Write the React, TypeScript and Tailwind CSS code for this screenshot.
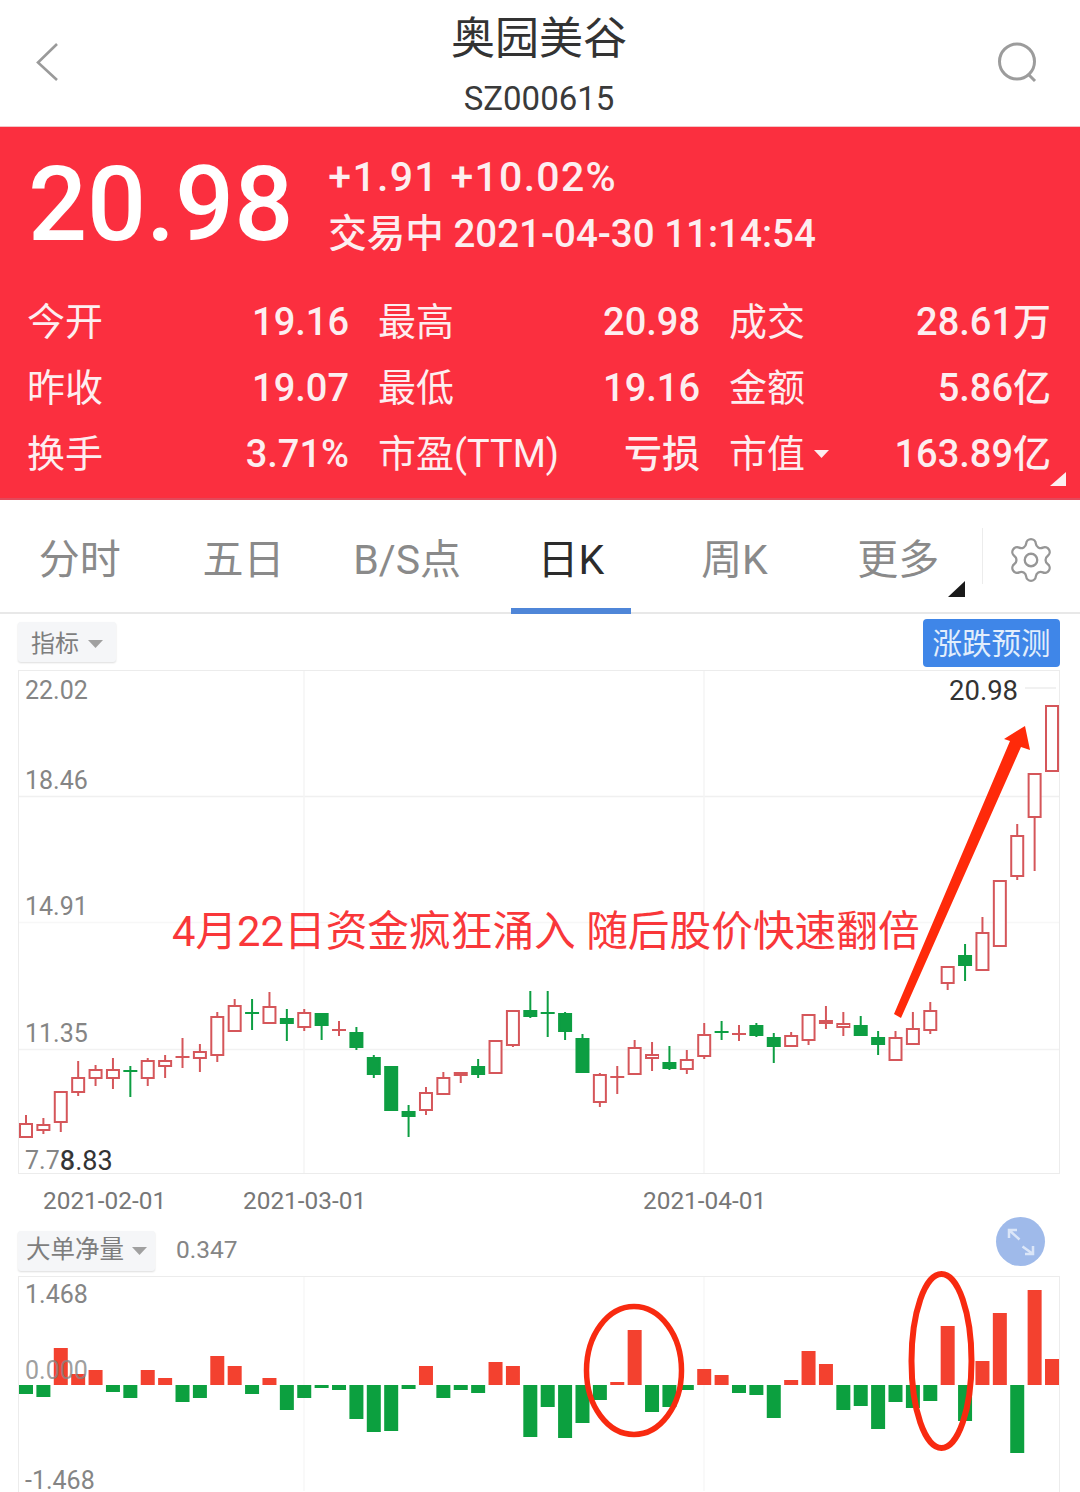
import { Settings } from "lucide-react";

// [isUp, high, bodyTop, bodyBottom, low], y in page pixels
const candles: [number, number, number, number, number][] = [
  [1, 1116, 1125, 1138, 1138], [1, 1119, 1126, 1131, 1135], [1, 1093, 1093, 1123, 1133], [1, 1062, 1079, 1093, 1097],
  [1, 1066, 1071, 1079, 1087], [1, 1059, 1071, 1079, 1090], [0, 1067, 1072, 1073, 1098], [1, 1059, 1062, 1079, 1087],
  [1, 1056, 1062, 1067, 1079], [1, 1039, 1058, 1059, 1069], [1, 1045, 1053, 1059, 1073], [1, 1013, 1018, 1056, 1063],
  [1, 1000, 1007, 1032, 1033], [0, 1000, 1014, 1015, 1031], [1, 993, 1008, 1024, 1025], [0, 1010, 1020, 1024, 1042],
  [1, 1010, 1014, 1028, 1032], [0, 1015, 1015, 1026, 1041], [1, 1022, 1031, 1032, 1037], [0, 1028, 1034, 1048, 1051],
  [0, 1056, 1059, 1075, 1079], [0, 1068, 1068, 1111, 1112], [0, 1106, 1113, 1117, 1138], [1, 1088, 1094, 1111, 1116],
  [1, 1073, 1079, 1095, 1095], [1, 1074, 1074, 1076, 1084], [0, 1060, 1068, 1075, 1079], [1, 1042, 1042, 1074, 1074],
  [1, 1012, 1012, 1046, 1048], [0, 992, 1012, 1017, 1019], [0, 992, 1014, 1015, 1038], [0, 1013, 1015, 1032, 1041],
  [0, 1035, 1040, 1073, 1074], [1, 1074, 1076, 1103, 1108], [1, 1067, 1078, 1079, 1095], [1, 1041, 1049, 1075, 1076],
  [1, 1043, 1056, 1059, 1072], [0, 1047, 1064, 1069, 1071], [1, 1051, 1061, 1070, 1075], [1, 1024, 1036, 1057, 1060],
  [0, 1022, 1033, 1034, 1041], [1, 1026, 1035, 1036, 1042], [0, 1024, 1027, 1036, 1038], [0, 1034, 1039, 1047, 1064],
  [1, 1033, 1037, 1047, 1047], [1, 1016, 1016, 1041, 1046], [1, 1007, 1022, 1024, 1030], [1, 1013, 1025, 1028, 1037],
  [0, 1017, 1027, 1036, 1037], [0, 1032, 1039, 1045, 1056], [1, 1032, 1039, 1061, 1062], [1, 1013, 1030, 1045, 1045],
  [1, 1003, 1012, 1031, 1035], [1, 968, 968, 984, 991], [0, 945, 957, 966, 982], [1, 918, 934, 971, 971],
  [1, 882, 882, 947, 947], [1, 825, 837, 877, 881], [1, 775, 775, 818, 872], [1, 707, 707, 772, 772],
];

// net volume bars, in px from the zero line (positive goes up)
const bars = [
  -9, -12, 37, 11, 15, -7, -13, 15, 7, -17, -13, 29, 19, -9, 7, -25, -13, -3, -5, -34, -47, -46, -4, 19, -13, -5, -8, 23,
  19, -52, -22, -53, -38, -15, 3, 55, -27, -22, -5, 16, 10, -8, -10, -33, 5, 34, 21, -25, -21, -44, -17, -23, -16, 59,
  -36, 24, 72, -68, 95, 26,
];

const candleX = (i: number) => 26 + i * 17.39;

const stats = [
  ["今开", "19.16", "最高", "20.98", "成交", "28.61万"],
  ["昨收", "19.07", "最低", "19.16", "金额", "5.86亿"],
  ["换手", "3.71%", "市盈(TTM)", "亏损", "市值", "163.89亿"],
];

const tabs = ["分时", "五日", "B/S点", "日K", "周K", "更多"];

function Caret({ color = "#a0a0a0" }: { color?: string }) {
  return (
    <svg width="15" height="8" viewBox="0 0 15 8" className="shrink-0">
      <path d="M0 0H15L7.5 8Z" fill={color} />
    </svg>
  );
}

function KChart() {
  return (
    <svg viewBox="19 672 1040 502" className="block w-[1040px] h-[502px]">
      <line x1="19" x2="1059" y1="797.5" y2="797.5" stroke="#f0f0f0" strokeWidth="1.5" />
      <line x1="19" x2="1059" y1="923.5" y2="923.5" stroke="#f7f7f7" strokeWidth="1.5" />
      <line x1="19" x2="1059" y1="1050.5" y2="1050.5" stroke="#f2f2f2" strokeWidth="1.5" />
      <line x1="1025" x2="1056" y1="689" y2="689" stroke="#ececec" strokeWidth="1.5" />
      {[304, 704].map((x) => (
        <line key={x} x1={x} x2={x} y1="672" y2="1174" stroke="#f5f5f5" strokeWidth="1.5" />
      ))}
      {candles.map(([up, high, top, bottom, low], i) => {
        const x = candleX(i);
        const color = up ? "#d5565a" : "#0d9e42";
        const flat = bottom - top <= 1;
        return (
          <g key={i}>
            <line x1={x} x2={x} y1={high} y2={low} stroke={color} strokeWidth="2" />
            {flat ? (
              <line x1={x - 7} x2={x + 7} y1={top} y2={top} stroke={color} strokeWidth="2" />
            ) : (
              <rect
                x={x - 6}
                y={top}
                width="12"
                height={bottom - top}
                fill={up ? "#fff" : color}
                stroke={color}
                strokeWidth="2"
              />
            )}
          </g>
        );
      })}
    </svg>
  );
}

function FlowChart() {
  return (
    <svg viewBox="19 1278 1040 214" className="block w-[1040px] h-[214px]">
      {[304, 704].map((x) => (
        <line key={x} x1={x} x2={x} y1="1278" y2="1492" stroke="#f7f7f7" strokeWidth="1.5" />
      ))}
      {bars.map((v, i) => (
        <rect
          key={i}
          x={candleX(i) - 7}
          y={v > 0 ? 1386 - v : 1386}
          width="14"
          height={Math.abs(v)}
          fill={v > 0 ? "#f3412f" : "#0ca03f"}
        />
      ))}
    </svg>
  );
}

export default function App() {
  return (
    <div className="relative w-[1080px] h-[1492px] overflow-hidden bg-white font-[Roboto,'Noto_Sans_CJK_SC',sans-serif]">
      {/* Top bar */}
      <div className="flex h-[126px] items-center justify-between pl-[35px] pr-[42px]">
        <svg width="24" height="40" viewBox="0 0 24 40" className="mb-[2px]">
          <path d="M22 2L3 20.5L22 38" fill="none" stroke="#9a9a9a" strokeWidth="2.6" />
        </svg>
        <div className="flex flex-col items-center pl-[22px] pt-[8px]">
          <div className="text-[44px] leading-[52px] text-[#333] mt-[-2px]">奥园美谷</div>
          <div className="text-[33px] leading-[40px] text-[#3a3a3a] mt-[14px]">SZ000615</div>
        </div>
        <svg width="41" height="42" viewBox="0 0 41 42" className="mb-[1px]">
          <circle cx="20" cy="19.5" r="17.5" fill="none" stroke="#9c9c9c" strokeWidth="3" />
          <path d="M31 32L38 39" fill="none" stroke="#9c9c9c" strokeWidth="3" />
        </svg>
      </div>

      {/* Quote band */}
      <div className="relative h-[374px] border-t border-t-[#f3c5c8] border-b-2 border-b-[#e3485a] bg-[#fb2f3f] text-[#fdeef0]">
        <div className="flex h-[152px] items-start pl-[28px]">
          <div className="text-[104px] leading-[120px] font-medium text-white mt-[18px]">20.98</div>
          <div className="ml-[35px] mt-[25px] font-medium">
            <div className="text-[41px] leading-[50px] tracking-[1.3px]">+1.91 +10.02%</div>
            <div className="leading-[50px] mt-[7px] text-[38.5px]">交易中 2021-04-30 11:14:54</div>
          </div>
        </div>
        <div className="flex flex-col pl-[27px] pr-[29px] mt-[10px]">
          {stats.map((row) => (
            <div key={row[0]} className="flex h-[66px] items-center gap-[29px] text-[38px] leading-[50px]">
              <div className="flex w-[322px] justify-between">
                <span>{row[0]}</span>
                <span className="font-medium">{row[1]}</span>
              </div>
              <div className="flex w-[322px] justify-between">
                <span>{row[2]}</span>
                <span className="font-medium">{row[3]}</span>
              </div>
              <div className="flex w-[322px] justify-between">
                <span className="flex items-center gap-[9px]">
                  {row[4]}
                  {row[4] === "市值" && <Caret color="#fdeef0" />}
                </span>
                <span className="font-medium">{row[5]}</span>
              </div>
            </div>
          ))}
        </div>
        <svg width="16" height="14" viewBox="0 0 16 14" className="absolute right-[14px] bottom-[12px]">
          <path d="M16 0V14H0Z" fill="#fdeef0" />
        </svg>
      </div>

      {/* Period tabs */}
      <div className="relative flex h-[114px] border-b-2 border-b-[#e8e8e8]">
        <div className="grid w-[982px] grid-cols-6">
          {tabs.map((tab) => (
            <div key={tab} className="relative flex items-center justify-center pt-[10px] pr-[4px]">
              <span className={`text-[41px] ${tab === "日K" ? "text-[#2c2c2c]" : "text-[#8a8a8a]"}`}>{tab}</span>
              {tab === "日K" && (
                <div className="absolute bottom-[-2px] left-[20px] h-[6px] w-[120px] bg-[#4f86d8]" />
              )}
            </div>
          ))}
        </div>
        <div className="flex flex-1 items-center justify-center border-l border-l-[#ececec] my-[28px] pt-[8px] pr-[2px]">
          <Settings size={50} strokeWidth={1.1} color="#969696" />
        </div>
        <svg width="17" height="16" viewBox="0 0 17 16" className="absolute left-[948px] top-[81px]">
          <path d="M17 0V16H0Z" fill="#1a1a1a" />
        </svg>
      </div>

      {/* K chart toolbar */}
      <div className="flex h-[56px] items-center justify-between pl-[18px] pr-[20px]">
        <div className="flex h-[40px] w-[98px] items-center gap-[9px] rounded-[3px] bg-[#f5f6f8] pl-[13px] pt-[4px] text-[24px] text-[#7e7e7e] shadow-[0_1px_2px_#dddddd]">
          指标
          <Caret />
        </div>
        <div className="mt-[2px] flex h-[48px] w-[137px] items-center justify-center rounded-[4px] bg-[#3f86e8] pt-[3px] text-[29.5px] text-[#e2eefc]">
          涨跌预测
        </div>
      </div>

      {/* K chart */}
      <div className="relative mx-[18px] h-[504px] w-[1042px] border border-[#ececec]">
        <KChart />
        <span className="absolute left-[6px] top-[5px] text-[25px] leading-[30px] text-[#858585]">22.02</span>
        <span className="absolute left-[6px] top-[95px] text-[25px] leading-[30px] text-[#858585]">18.46</span>
        <span className="absolute left-[6px] top-[221px] text-[25px] leading-[30px] text-[#858585]">14.91</span>
        <span className="absolute left-[6px] top-[348px] text-[25px] leading-[30px] text-[#858585]">11.35</span>
        <span className="absolute left-[6px] top-[475px] text-[25px] leading-[30px] text-[#858585]">7.78</span>
        <span className="absolute left-[41px] top-[475px] text-[27px] leading-[30px] text-[#333]">8.83</span>
        <span className="absolute left-[930px] top-[5px] text-[27.5px] leading-[30px] text-[#333]">20.98</span>
      </div>

      {/* Date axis */}
      <div className="flex h-[53px] items-center pl-[43px] pt-[2px] text-[24.4px] text-[#777]">
        <span className="w-[200px]">2021-02-01</span>
        <span className="w-[400px]">2021-03-01</span>
        <span>2021-04-01</span>
      </div>

      {/* Flow chart toolbar */}
      <div className="relative flex h-[49px] items-center pl-[18px] pb-[2px]">
        <div className="flex h-[40px] w-[137px] items-center gap-[8px] rounded-[3px] bg-[#f5f6f8] pl-[8px] text-[24.5px] text-[#7e7e7e] shadow-[0_1px_2px_#dddddd]">
          大单净量
          <Caret />
        </div>
        <span className="ml-[21px] text-[24.5px] text-[#858585]">0.347</span>
        <div className="absolute left-[996px] top-[-10px] flex h-[49px] w-[49px] items-center justify-center rounded-full bg-[#9fbaea]">
          <svg width="30" height="30" viewBox="0 0 30 30">
            <path d="M3 3L13.5 12.5M3 11V3H11M27 27L16.5 19.5M27 19V27H19" fill="none" stroke="#dbe6f8" strokeWidth="2.5" />
          </svg>
        </div>
      </div>

      {/* Flow chart */}
      <div className="relative mx-[18px] h-[216px] w-[1042px] border-x border-t border-[#ececec]">
        <FlowChart />
        <span className="absolute left-[6px] top-[3px] text-[25px] leading-[30px] text-[#858585]">1.468</span>
        <span className="absolute left-[6px] top-[79px] text-[25px] leading-[30px] text-[#858585]/80">0.000</span>
        <span className="absolute left-[6px] top-[189px] text-[25px] leading-[30px] text-[#858585]">-1.468</span>
      </div>

      {/* Hand-drawn annotations on top of the screenshot */}
      <svg viewBox="0 0 1080 1492" className="absolute inset-0 h-[1492px] w-[1080px]">
        <polygon
          points="1025,726 1030,750 1021,747 901,1018 894,1014 1010,741 1004,739"
          fill="#ff2a0a"
        />
        <ellipse cx="634" cy="1370.5" rx="47.5" ry="64" fill="none" stroke="#f82a10" strokeWidth="5.5" />
        <ellipse cx="941.5" cy="1361" rx="30" ry="87" fill="none" stroke="#f82a10" strokeWidth="6" />
      </svg>
      <div className="absolute left-[172px] top-[902px] whitespace-pre text-[41.7px] leading-[60px] text-[#f9373a]">
        4月22日资金疯狂涌入 随后股价快速翻倍
      </div>
    </div>
  );
}
